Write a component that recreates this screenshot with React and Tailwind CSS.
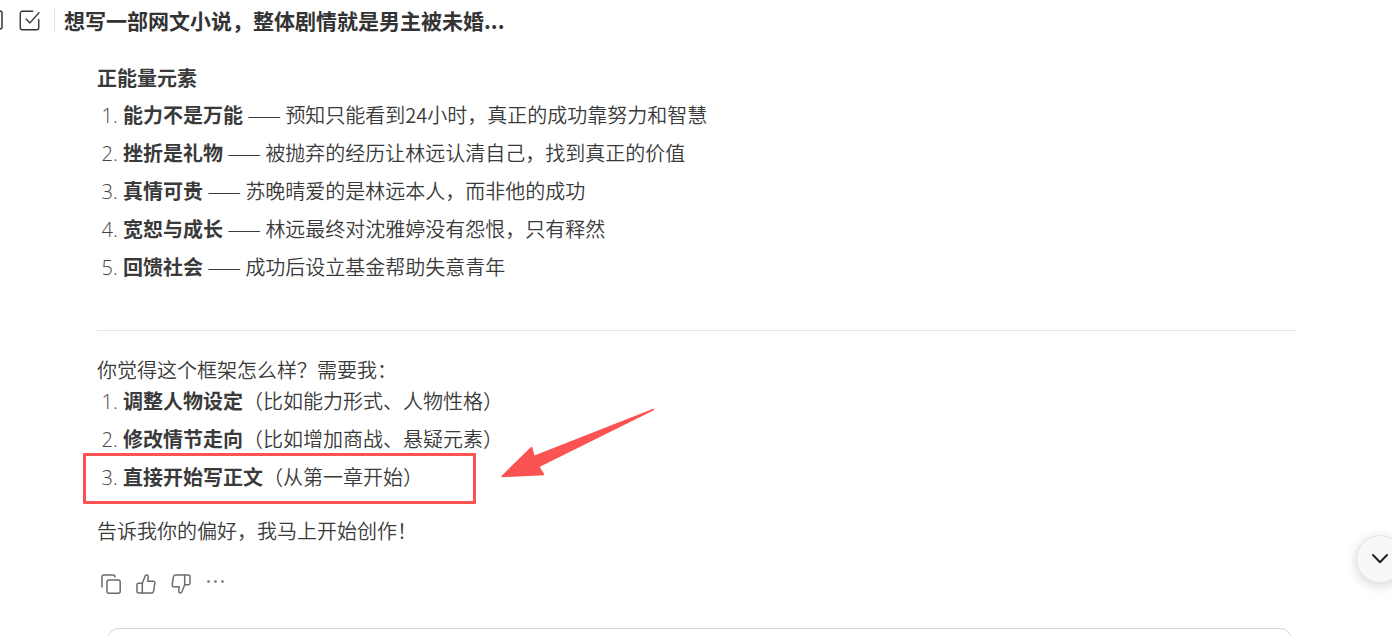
import React from "react";

const themes = [
  ["能力不是万能", "预知只能看到24小时，真正的成功靠努力和智慧"],
  ["挫折是礼物", "被抛弃的经历让林远认清自己，找到真正的价值"],
  ["真情可贵", "苏晚晴爱的是林远本人，而非他的成功"],
  ["宽恕与成长", "林远最终对沈雅婷没有怨恨，只有释然"],
  ["回馈社会", "成功后设立基金帮助失意青年"],
];

const options = [
  ["调整人物设定", "（比如能力形式、人物性格）"],
  ["修改情节走向", "（比如增加商战、悬疑元素）"],
  ["直接开始写正文", "（从第一章开始）"],
];

const listClass =
  "list-decimal pl-[26px] leading-[38px] marker:font-['Open_Sans'] marker:text-[#444]";

function Icon({ children, className = "size-5" }) {
  return (
    <svg
      viewBox="0 0 20 20"
      className={className}
      fill="none"
      stroke="currentColor"
      strokeWidth="1.5"
      strokeLinecap="round"
      strokeLinejoin="round"
      aria-hidden="true"
    >
      {children}
    </svg>
  );
}

function Header() {
  return (
    <header className="flex h-10 shrink-0 items-center text-[#333]">
      <button aria-label="侧栏" className="flex h-5 w-[3px] justify-end overflow-hidden">
        <Icon className="size-5 shrink-0">
          <rect x="1" y="1" width="18" height="18" rx="2" />
        </Icon>
      </button>
      <button aria-label="选择" className="ml-4">
        <Icon className="size-[21px]">
          <path d="M13 1.2H3.2a2 2 0 0 0-2 2v13.6a2 2 0 0 0 2 2h13.6a2 2 0 0 0 2-2V9" strokeWidth="1.3" />
          <path d="m6.8 8.6 3.6 3.7L19 2.6" strokeWidth="1.3" />
        </Icon>
      </button>
      <span className="ml-[14px] h-6 w-px bg-[#e2e2e2]" />
      <h1 className="ml-[9px] text-[21px] leading-[30px] font-bold">
        想写一部网文小说，整体剧情就是男主被未婚...
      </h1>
    </header>
  );
}

function Actions() {
  return (
    <div className="mt-[30px] flex items-center gap-[15px] pl-1 text-[#6b6b6b]">
      <button aria-label="复制">
        <Icon>
          <path d="M1 13V3a2 2 0 0 1 2-2h9a2 2 0 0 1 2 2" />
          <rect x="6" y="6" width="13.2" height="13.2" rx="2" />
        </Icon>
      </button>
      <button aria-label="赞">
        <Icon>
          <path d="M6.3 9.3 9.2 2c.3-.7.8-1 1.4-1 1.1 0 1.7.8 1.6 1.9l-.4 4.3h5.2c1.2 0 2 .9 1.8 2.1l-1.2 7.8c-.2 1.1-1 1.9-2.1 1.9H2.6c-1 0-1.6-.6-1.6-1.6v-6.5c0-1 .6-1.6 1.6-1.6h3.7Z" />
          <path d="M6.3 9.3V19" />
        </Icon>
      </button>
      <button aria-label="踩">
        <Icon>
          <path d="M13.7 10.7 10.8 18c-.3.7-.8 1-1.4 1-1.1 0-1.7-.8-1.6-1.9l.4-4.3H3c-1.2 0-2-.9-1.800-2.100l1.200-7.800C2.600 1.800 3.400 1 4.500 1h12.900c1 0 1.600.6 1.600 1.600v6.500c0 1-.6 1.600-1.600 1.600h-3.700Z" />
          <path d="M13.7 10.7V1" />
        </Icon>
      </button>
      <button aria-label="更多">
        <Icon>
          <g fill="currentColor" stroke="none">
            <circle cx="2.5" cy="7.500" r="1.300" />
            <circle cx="9.500" cy="7.500" r="1.300" />
            <circle cx="16.500" cy="7.500" r="1.300" />
          </g>
        </Icon>
      </button>
    </div>
  );
}

function Highlight() {
  return (
    <>
      <span className="pointer-events-none absolute -top-[5px] -left-[40px] h-[51px] w-[393px] rounded-[1px] border-3 border-[#fb5252]" />
      <svg
        viewBox="0 0 156 72"
        className="pointer-events-none absolute -top-[51px] left-[377px] h-[72px] w-[156px]"
        fill="#fb5252"
        aria-hidden="true"
      >
        <path
          d="M2 69.500 31.500 40.500 34 49.500 153.500 2.500 38.500 59.500 43.500 67.500Z"
          stroke="#fb5252"
          strokeWidth="1.500"
          strokeLinejoin="round"
        />
      </svg>
    </>
  );
}

export default function App() {
  return (
    <div className="relative flex h-screen flex-col overflow-hidden bg-white font-['Noto_Sans_CJK_SC','Noto_Sans',sans-serif]">
      <Header />
      <main className="pt-[23px] pr-[95px] pl-[97px] text-[20px] leading-[26px] font-[350] text-[#3a3a3a]">
        <h2 className="leading-[30px] font-bold">正能量元素</h2>
        <ol className={`mt-[3px] ${listClass}`}>
          {themes.map(([name, text]) => (
            <li key={name}>
              <strong className="font-bold">{name}</strong> —— {text}
            </li>
          ))}
        </ol>
        <hr className="mt-11 border-[#e5e5e5]" />
        <p className="mt-[26px]">你觉得这个框架怎么样？需要我：</p>
        <ol className={`-mt-px ${listClass}`}>
          {options.map(([name, text], i) => (
            <li key={name} className="relative">
              <strong className="font-bold">{name}</strong>
              {text}
              {i === 2 && <Highlight />}
            </li>
          ))}
        </ol>
        <p className="mt-[22px]">告诉我你的偏好，我马上开始创作！</p>
        <Actions />
        <form className="mt-[34px] mr-[5px] ml-[10px] rounded-xl border border-[#d6d6d6] p-4">
          <textarea aria-label="输入消息" className="block w-full resize-none outline-none" rows={2} />
        </form>
      </main>
      <button
        aria-label="滚动到底部"
        className="absolute -right-3 bottom-[53px] flex size-12 items-center justify-center rounded-full border border-[#e4e4e4] bg-[#f7f7f7] text-[#222] shadow-[0_3px_12px_rgba(0,0,0,0.16)]"
      >
        <Icon>
          <path d="m3 6 7 7.200L17 6" strokeWidth="2" />
        </Icon>
      </button>
    </div>
  );
}
